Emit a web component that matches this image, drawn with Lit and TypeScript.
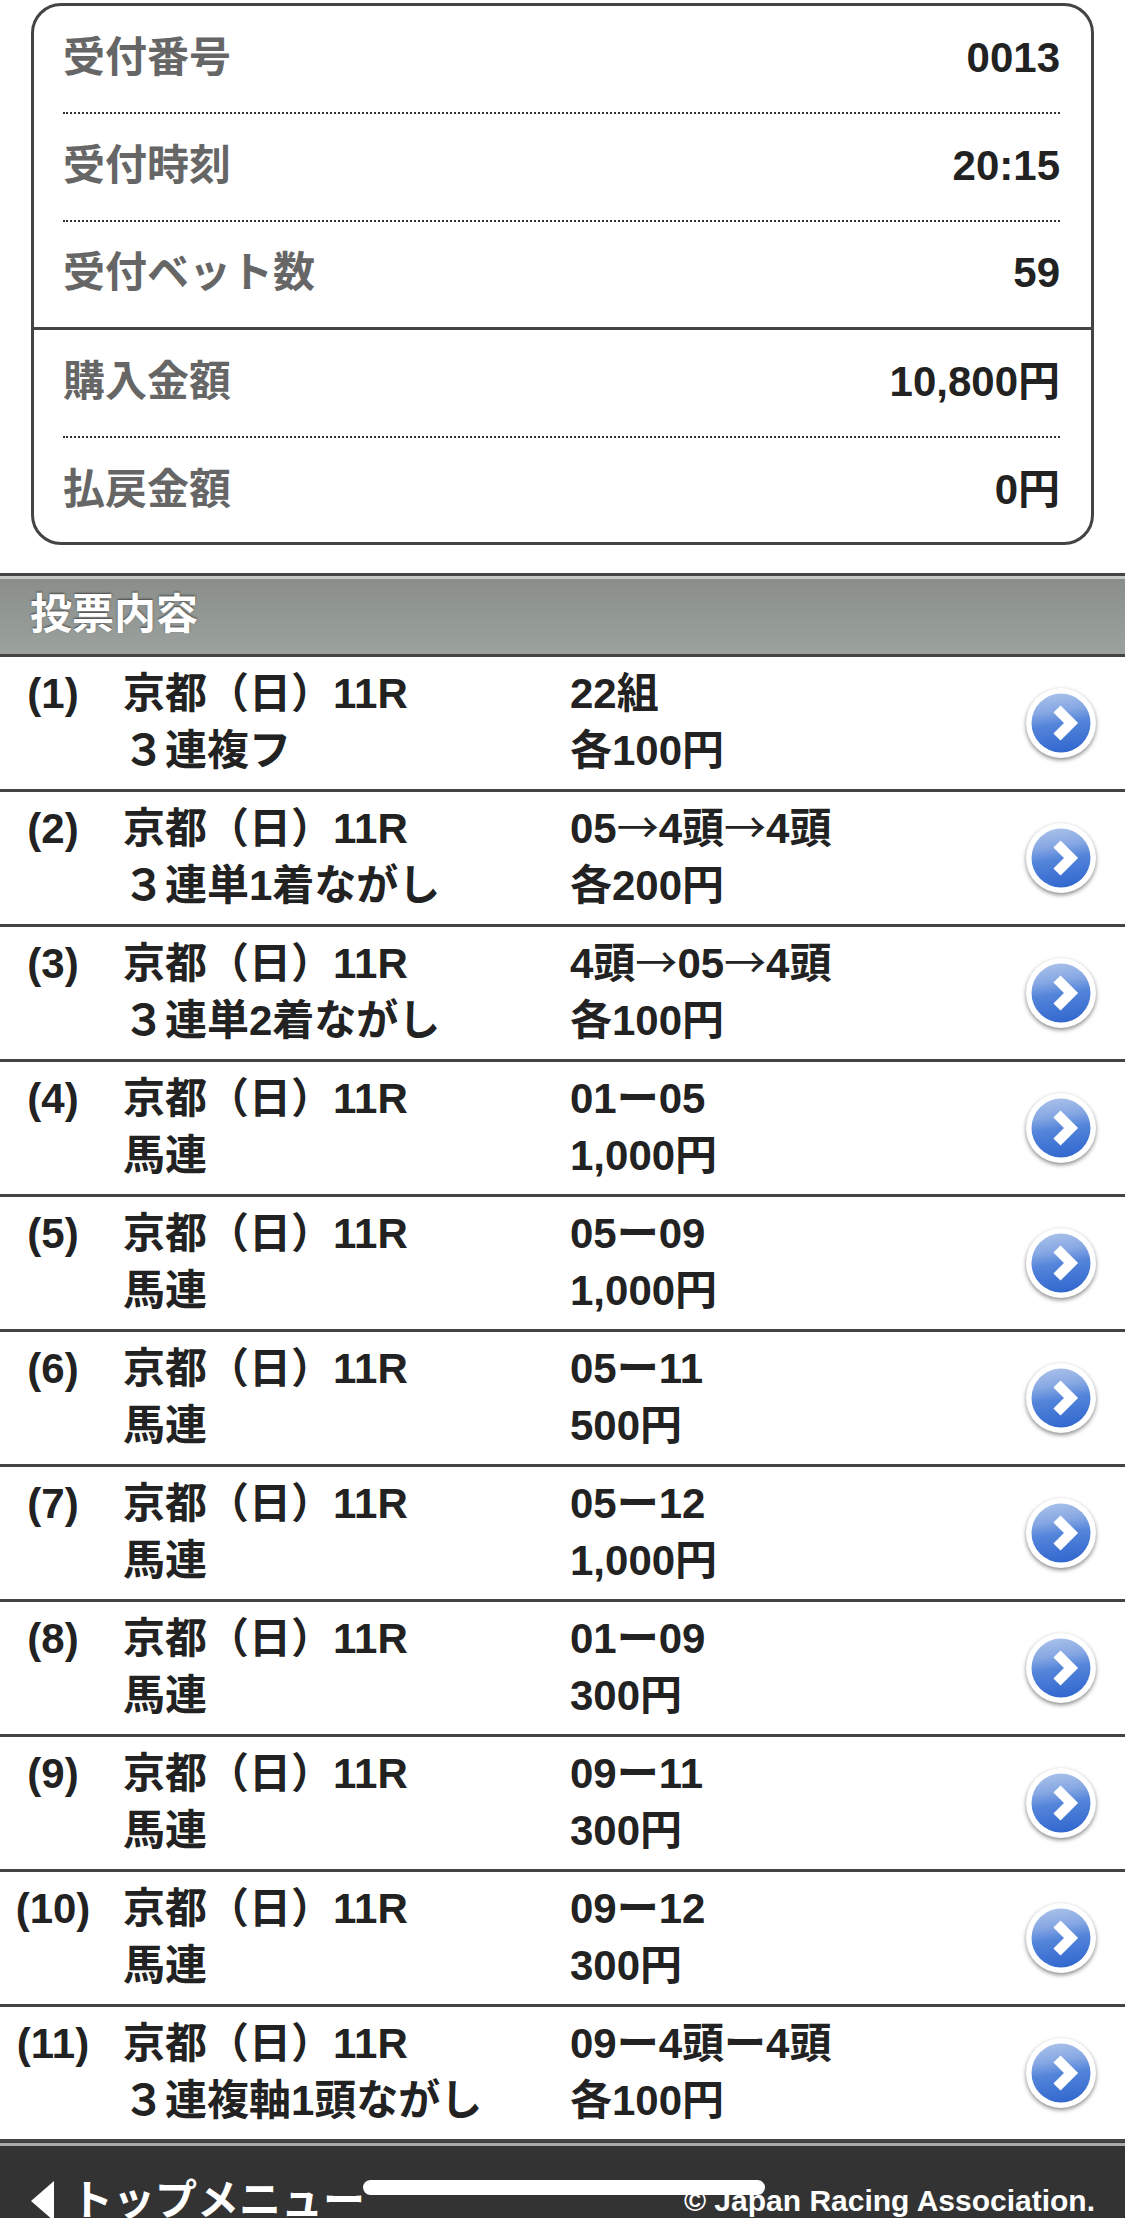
import { LitElement, html, css } from 'lit';
import { customElement } from 'lit/decorators.js';

const summary = [
  { label: '受付番号', value: '0013' },
  { label: '受付時刻', value: '20:15' },
  { label: '受付ベット数', value: '59', solid: true },
  { label: '購入金額', value: '10,800円' },
  { label: '払戻金額', value: '0円', last: true },
];

const bets = [
  ['(1)', '３連複フ', '22組', '各100円'],
  ['(2)', '３連単1着ながし', '05→4頭→4頭', '各200円'],
  ['(3)', '３連単2着ながし', '4頭→05→4頭', '各100円'],
  ['(4)', '馬連', '01ー05', '1,000円'],
  ['(5)', '馬連', '05ー09', '1,000円'],
  ['(6)', '馬連', '05ー11', '500円'],
  ['(7)', '馬連', '05ー12', '1,000円'],
  ['(8)', '馬連', '01ー09', '300円'],
  ['(9)', '馬連', '09ー11', '300円'],
  ['(10)', '馬連', '09ー12', '300円'],
  ['(11)', '３連複軸1頭ながし', '09ー4頭ー4頭', '各100円'],
];

@customElement('app-root')
export class AppRoot extends LitElement {
  static styles = css`
    :host {
      display: block;
      position: relative;
      height: 2218px;
      overflow: hidden;
      background: #fff;
      color: #222;
      font-family: 'Liberation Sans', 'Noto Sans CJK JP', sans-serif;
      font-size: 42px;
      font-weight: 700;
      line-height: 57px;
    }

    /* 受付情報 */
    .card {
      margin: 3px 31px 0;
      height: 542px;
      box-sizing: border-box;
      border: 3px solid #444;
      border-radius: 30px;
    }

    .card-row {
      display: flex;
      justify-content: space-between;
      align-items: center;
      box-sizing: border-box;
      height: 108px;
      margin: 0 31px 0 29px;
      padding-bottom: 4px;
      border-bottom: 2px dotted #333;
    }

    .card-row--solid {
      margin: 0;
      padding: 0 31px 4px 29px;
      border-bottom: 3px solid #444;
    }

    .card-row--last {
      padding-bottom: 6px;
      border-bottom: 0;
    }

    .label {
      color: #666;
    }

    /* 投票内容 */
    .section {
      margin-top: 28px;
      height: 78px;
      padding-left: 30px;
      border-top: 3px solid #444;
      border-bottom: 3px solid #444;
      box-shadow: inset 0 3px 0 #c3c8c5;
      background: linear-gradient(#898e8a, #9ba19d);
      color: #fff;
      line-height: 78px;
      text-shadow: 0 -1px 2px #444;
    }

    .row {
      display: grid;
      grid-template-columns: 106px 17px 447px 1fr 70px;
      box-sizing: border-box;
      height: 135px;
      padding: 8px 29px 0 0;
      border-bottom: 3px solid #444;
    }

    .no {
      grid-column: 1;
      text-align: center;
    }

    .name {
      grid-column: 3;
    }

    .bet {
      grid-column: 4;
    }

    /* 矢印は細い字 */
    .arrow {
      font-family: 'Noto Sans CJK JP', sans-serif;
      font-weight: 400;
      line-height: 0;
    }

    .icon {
      grid-column: 5;
      width: 70px;
      height: 70px;
      margin-top: 23px;
      overflow: visible;
    }

    /* フッター */
    .footer {
      display: flex;
      justify-content: space-between;
      align-items: center;
      box-sizing: border-box;
      height: 76px;
      padding: 40px 30px 0 31px;
      border-top: 1px solid #3a3a3a;
      box-shadow: inset 0 3px 0 #aaa;
      background: #333;
      color: #fff;
    }

    .back {
      display: flex;
      align-items: center;
      gap: 17px;
      white-space: nowrap;
    }

    .back-mark {
      width: 0;
      height: 0;
      border-top: 20px solid transparent;
      border-bottom: 20px solid transparent;
      border-right: 23px solid #fff;
    }

    .copy {
      font-size: 30px;
    }

    .indicator {
      position: absolute;
      left: 363px;
      top: 2180px;
      width: 402px;
      height: 15px;
      border-radius: 8px;
      background: #fff;
    }
  `;

  private bet(text: string) {
    return text.split('→').map((part, i) =>
      i ? html`<span class="arrow">→</span>${part}` : part
    );
  }

  private icon() {
    return html`
      <svg class="icon" viewBox="0 0 70 70">
        <defs>
          <linearGradient id="blue" x1="0.35" y1="0" x2="0.5" y2="1">
            <stop offset="0" stop-color="#a9c1ea" />
            <stop offset="0.3" stop-color="#86a7e3" />
            <stop offset="0.52" stop-color="#5485da" />
            <stop offset="1" stop-color="#3268cf" />
          </linearGradient>
          <filter id="soft" x="-20%" y="-20%" width="140%" height="140%">
            <feGaussianBlur stdDeviation="2" />
          </filter>
        </defs>
        <circle cx="35" cy="37" r="35" fill="#888" filter="url(#soft)" />
        <circle cx="35" cy="35" r="35" fill="#fff" />
        <circle cx="35" cy="35" r="29.5" fill="url(#blue)" />
        <path d="M31 21 L45 35 L31 49" fill="none" stroke="#fff" stroke-width="10" />
      </svg>
    `;
  }

  render() {
    return html`
      <div class="card">
        ${summary.map(
          (s) => html`
            <div class="card-row ${s.solid ? 'card-row--solid' : ''} ${s.last ? 'card-row--last' : ''}">
              <span class="label">${s.label}</span>
              <span>${s.value}</span>
            </div>
          `
        )}
      </div>
      <div class="section">投票内容</div>
      ${bets.map(
        ([no, name, combo, amount]) => html`
          <div class="row">
            <div class="no">${no}</div>
            <div class="name">京都（日）11R<br />${name}</div>
            <div class="bet">${this.bet(combo)}<br />${amount}</div>
            ${this.icon()}
          </div>
        `
      )}
      <div class="footer">
        <div class="back"><span class="back-mark"></span>トップメニュー</div>
        <div class="copy">© Japan Racing Association.</div>
      </div>
      <div class="indicator"></div>
    `;
  }
}
